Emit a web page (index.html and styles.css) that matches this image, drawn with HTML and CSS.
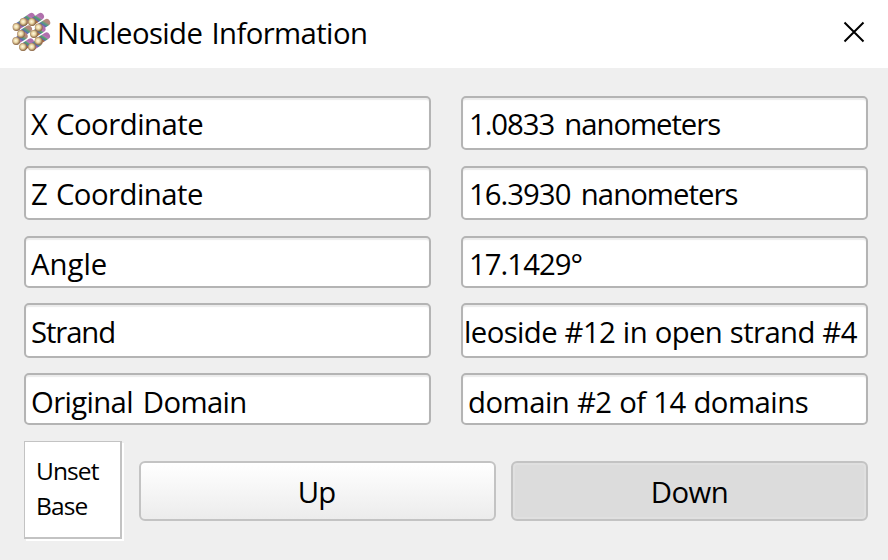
FILE: index.html
```html
<!DOCTYPE html>
<html lang="en">
<head>
<meta charset="utf-8">
<title>Nucleoside Information</title>
<link rel="stylesheet" href="styles.css">
</head>
<body>
<div class="dialog">
  <header class="titlebar">
    <svg class="logo" width="44" height="44" viewBox="10 10 44 44" aria-hidden="true">
      <defs>
        <radialGradient id="ball" cx=".45" cy=".45" r=".56">
          <stop offset="0" stop-color="#fffbe0"/><stop offset=".45" stop-color="#ecd8a8"/><stop offset="1" stop-color="#87633f"/>
        </radialGradient>
        <linearGradient id="rodA" x1="0" y1="1" x2="1" y2="0">
          <stop offset=".3" stop-color="#a8683a"/><stop offset=".45" stop-color="#6468a8"/><stop offset=".65" stop-color="#4aa668"/><stop offset=".88" stop-color="#bc78bc"/><stop offset="1" stop-color="#b070ac"/>
        </linearGradient>
        <linearGradient id="rodB" x1="0" y1="1" x2="1" y2="0">
          <stop offset=".3" stop-color="#b068a8"/><stop offset=".5" stop-color="#5c68b4"/><stop offset=".75" stop-color="#58a07c"/><stop offset="1" stop-color="#b4887c"/>
        </linearGradient>
      </defs>
      <g fill="none" stroke-width="7" stroke-linecap="round">
        <path stroke="url(#rodA)" d="M23.500 22l8-5.500"/><path stroke="url(#rodB)" d="M16.500 27l8-5"/>
        <path stroke="url(#rodA)" d="M32 22l8.500-5.500"/><path stroke="url(#rodB)" d="M38.700 27.500l8-5"/>
        <path stroke="url(#rodB)" d="M21 34l7.500-5"/><path stroke="url(#rodA)" d="M34 34l8-5"/>
        <path stroke="url(#rodB)" d="M16.200 41l8-5"/><path stroke="url(#rodA)" d="M38.500 41l8-5"/>
        <path stroke="url(#rodA)" d="M23 47l7.500-5"/><path stroke="url(#rodB)" d="M32 47l7-4.500"/>
      </g>
      <g fill="url(#ball)">
        <circle cx="23.500" cy="22" r="3.900"/><circle cx="32" cy="22" r="3.900"/>
        <circle cx="16.500" cy="27" r="3.900"/><circle cx="38.700" cy="27.500" r="3.900"/>
        <circle cx="21" cy="34" r="3.900"/><circle cx="34" cy="34" r="3.900"/>
        <circle cx="16.200" cy="41" r="3.900"/><circle cx="38.500" cy="41" r="3.900"/>
        <circle cx="23" cy="47" r="3.900"/><circle cx="32" cy="47" r="3.900"/>
      </g>
    </svg>
    <h1 class="title">Nucleoside Information</h1>
    <svg class="close" width="22" height="22" viewBox="0 0 22 22" aria-label="Close"><path d="M1.500 1.500l19 19M20.500 1.500l-19 19"/></svg>
  </header>
  <main class="content">
    <div class="fields">
      <div class="field"><span class="t-x">X Coordinate</span></div>
      <div class="field value"><span class="t-xv">1.0833 nanometers</span></div>
      <div class="field"><span class="t-x">Z Coordinate</span></div>
      <div class="field value"><span class="t-zv">16.3930 nanometers</span></div>
      <div class="field"><span class="t-angle">Angle</span></div>
      <div class="field value"><span class="t-anglev">17.1429°</span></div>
      <div class="field"><span class="t-strand">Strand</span></div>
      <div class="field scrolled"><span class="t-strandv">leoside #12 in open strand #4</span></div>
      <div class="field"><span class="t-dom">Original Domain</span></div>
      <div class="field"><span class="t-domv">domain #2 of 14 domains</span></div>
    </div>
    <div class="actions">
      <div class="base"><span class="t-unset">Unset</span><br><span class="t-base">Base</span></div>
      <button class="btn"><span class="t-up">Up</span></button>
      <button class="btn pressed"><span class="t-down">Down</span></button>
    </div>
  </main>
</div>
</body>
</html>
```
FILE: styles.css
```css
* { box-sizing: border-box; }
body {
  margin: 0;
  background: #efefef;
  color: #000;
  font: 29.3px/40px "Open Sans", "Noto Sans", sans-serif;
}
.dialog { width: 888px; height: 560px; overflow: hidden; }
.titlebar { display: flex; align-items: center; height: 68px; background: #fff; padding: 0 23px 4px 10px; }
.title { margin: 2px 0 0 3px; font-size: inherit; font-weight: 400; white-space: nowrap; letter-spacing: -.6px; word-spacing: 2.2px; }
.close { margin-left: auto; fill: none; stroke: #000; stroke-width: 2; }
.content { padding: 28px 20px 0 24px; }
.fields {
  display: grid;
  grid-template-columns: 407px 407px;
  grid-template-rows: 55px 55px 52px 55px 52px;
  column-gap: 30px;
  row-gap: 15px;
}
.field {
  border: 2px solid #b4b4b4;
  border-radius: 5px;
  background: #fff;
  box-shadow: inset 0 2px 1px #ececec;
  padding: 6px 0 0 5px;
  white-space: nowrap;
  overflow: hidden;
}
.field:nth-child(-n+4) { height: 54px; }
.field:nth-child(n+7) { padding-top: 7px; }
.value { padding-left: 6px; }
.scrolled { padding-left: 1px; }
.t-x { letter-spacing: -.5px; word-spacing: 1.5px; }
.t-xv { letter-spacing: -1.05px; word-spacing: 3.6px; }
.t-zv { letter-spacing: -.97px; word-spacing: 3.8px; }
.t-anglev { letter-spacing: -.95px; }
.t-strand { letter-spacing: -1.1px; }
.t-strandv { letter-spacing: -.6px; word-spacing: .6px; }
.t-dom { letter-spacing: -.65px; word-spacing: 3px; }
.t-domv { letter-spacing: -.5px; word-spacing: .5px; }
.t-unset, .t-base { letter-spacing: -.9px; }
.t-up { letter-spacing: -1px; margin-right: 2px; }
.t-down { letter-spacing: -.5px; }
.actions {
  display: grid;
  grid-template-columns: 100px 357px 357px;
  column-gap: 15px;
  margin-top: 16px;
  align-items: start;
}
.base {
  width: 98px;
  height: 98px;
  border: 1px solid #c3c3c3;
  border-right-width: 2px;
  border-bottom-width: 2px;
  background: #fff;
  box-shadow: 2px 2px 0 #fff;
  padding: 11px 0 0 11px;
  font-size: 24.5px;
  line-height: 35px;
}
.btn {
  height: 60px;
  margin-top: 20px;
  border: 2px solid #c3c3c3;
  border-radius: 6px;
  background: linear-gradient(#fff, #ececec);
  font: inherit;
  color: inherit;
  padding: 2px 0 0;
}
.pressed { background: #dcdcdc; box-shadow: inset 0 0 0 2px #e0e0e0; }
```
